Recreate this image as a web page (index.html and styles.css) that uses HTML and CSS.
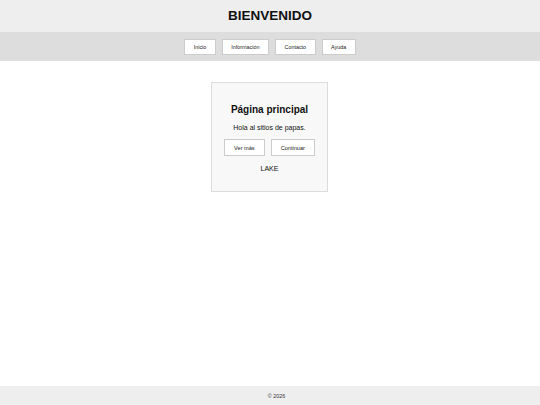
FILE: index.html
```html
<!DOCTYPE html>
<html lang="es">
<head>
<meta charset="utf-8">
<title>Bienvenido</title>
<link rel="stylesheet" href="styles.css">
</head>
<body>
<div class="page">
  <header class="header">
    <h1 class="title">BIENVENIDO</h1>
  </header>
  <nav class="nav">
    <button class="nav-btn">Inicio</button>
    <button class="nav-btn">Información</button>
    <button class="nav-btn">Contacto</button>
    <button class="nav-btn">Ayuda</button>
  </nav>
  <main class="main">
    <section class="card">
      <h2 class="card-title">Página principal</h2>
      <p class="card-text">Hola al sitios de papas.</p>
      <div class="card-actions">
        <button class="card-btn">Ver más</button>
        <button class="card-btn">Continuar</button>
      </div>
      <p class="card-text card-foot">LAKE</p>
    </section>
  </main>
  <footer class="footer">© 2026</footer>
</div>
</body>
</html>
```
FILE: styles.css
```css
* { box-sizing: border-box; }
html, body { margin: 0; padding: 0; }
body {
  font-family: "Liberation Sans", Arial, sans-serif;
  color: #111;
  background: #fff;
}
.page {
  display: flex;
  flex-direction: column;
  height: 405px;
}
.header {
  background: #eeeeee;
  height: 32px;
  display: flex;
  align-items: center;
  justify-content: center;
}
.title {
  margin: 0;
  font-size: 13.5px;
  line-height: 16px;
  font-weight: bold;
  color: #111;
}
.nav {
  background: #dddddd;
  height: 29px;
  display: flex;
  align-items: center;
  justify-content: center;
  gap: 6px;
}
.nav-btn {
  font-family: inherit;
  font-size: 5.4px;
  height: 16px;
  padding: 0 8.5px;
  background: #fff;
  border: 1px solid #cccccc;
  color: #222;
  margin: 0;
}
.main {
  flex: 1;
  display: flex;
  justify-content: center;
  align-items: flex-start;
  padding-top: 21px;
}
.card {
  width: 117px;
  height: 110px;
  margin-right: 1px;
  background: #f8f8f8;
  border: 1px solid #dddddd;
  padding-top: 21px;
  display: flex;
  flex-direction: column;
  align-items: center;
}
.card-title {
  margin: 0;
  font-size: 10px;
  line-height: 12px;
  font-weight: bold;
  color: #111;
}
.card-text {
  margin: 6.5px 0 0;
  font-size: 7px;
  line-height: 9px;
  color: #111;
}
.card-actions {
  display: flex;
  gap: 6px;
  margin-top: 7.5px;
}
.card-btn {
  font-family: inherit;
  font-size: 5.6px;
  height: 17px;
  padding: 0 9px;
  background: #fff;
  border: 1px solid #cccccc;
  color: #222;
  margin: 0;
}
.card-foot {
  margin-top: 8px;
}
.footer {
  background: #eeeeee;
  height: 19px;
  display: flex;
  align-items: center;
  justify-content: center;
  padding-left: 13px;
  font-size: 5.4px;
  color: #333;
}
```
